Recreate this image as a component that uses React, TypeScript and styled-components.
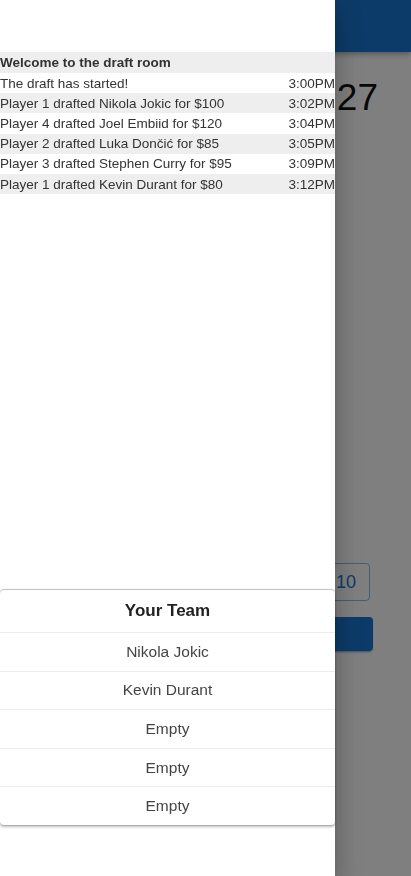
import React from 'react';
import styled, {createGlobalStyle} from 'styled-components';

const GlobalStyle = createGlobalStyle`
  html, body {
    margin: 0;
    padding: 0;
    background: #fff;
    font-family: "Liberation Sans", Arial, Helvetica, sans-serif;
  }
`;

interface LogEntry {
    text: string;
    time: string;
}

const log: LogEntry[] = [
    {text: 'The draft has started!', time: '3:00PM'},
    {text: 'Player 1 drafted Nikola Jokic for $100', time: '3:02PM'},
    {text: 'Player 4 drafted Joel Embiid for $120', time: '3:04PM'},
    {text: 'Player 2 drafted Luka Dončić for $85', time: '3:05PM'},
    {text: 'Player 3 drafted Stephen Curry for $95', time: '3:09PM'},
    {text: 'Player 1 drafted Kevin Durant for $80', time: '3:12PM'},
];

const team = ['Nikola Jokic', 'Kevin Durant', 'Empty', 'Empty', 'Empty'];

const Page = styled.div`
  min-height: 100vh;
  display: flex;
  flex-direction: column;
  box-sizing: border-box;
  padding-bottom: 225px;
`;

const AppBar = styled.header`
  height: 52px;
  background: #1976d2;
  box-shadow: 0 2px 4px -1px rgba(0, 0, 0, 0.2), 0 4px 5px 0 rgba(0, 0, 0, 0.14);
`;

const Timer = styled.div`
  display: flex;
  justify-content: flex-end;
  padding: 24px 33px 0 0;
  font-size: 37px;
  line-height: 44px;
  color: #111;
`;

const Controls = styled.div`
  margin-top: auto;
  display: flex;
  flex-direction: column;
  gap: 16px;
  padding: 0 38px 0 38px;
`;

const BidRow = styled.div`
  display: flex;
  justify-content: flex-end;
  padding-right: 3px;
`;

const BidButton = styled.button`
  height: 38px;
  min-width: 48px;
  padding: 0 10px;
  border: 1px solid rgba(25, 118, 210, 0.5);
  border-radius: 4px;
  background: transparent;
  color: #1976d2;
  font-family: inherit;
  font-size: 18px;
`;

const SubmitButton = styled.button`
  height: 34px;
  border: none;
  border-radius: 4px;
  background: #1976d2;
  color: #fff;
  font-family: inherit;
  font-size: 14px;
  box-shadow: 0 3px 1px -2px rgba(0, 0, 0, 0.2), 0 2px 2px 0 rgba(0, 0, 0, 0.14);
`;

const Backdrop = styled.div`
  position: fixed;
  inset: 0;
  background: rgba(0, 0, 0, 0.5);
`;

const Drawer = styled.aside`
  position: fixed;
  top: 0;
  left: 0;
  bottom: 0;
  width: 335px;
  background: #fff;
  display: flex;
  flex-direction: column;
  padding-top: 52px;
  box-sizing: border-box;
  box-shadow: 0 8px 10px -5px rgba(0, 0, 0, 0.2), 0 16px 24px 2px rgba(0, 0, 0, 0.14),
    0 6px 30px 5px rgba(0, 0, 0, 0.12);
`;

const LogList = styled.div`
  display: flex;
  flex-direction: column;
  flex: 1;
`;

const LogRow = styled.div<{ $shaded?: boolean; $header?: boolean }>`
  display: flex;
  justify-content: space-between;
  align-items: center;
  height: ${p => (p.$header ? '21px' : '20.2px')};
  background: ${p => (p.$shaded ? '#eeeeee' : '#fff')};
  font-size: 13.5px;
  font-weight: ${p => (p.$header ? 700 : 400)};
  color: #333;
  white-space: nowrap;
`;

const TeamCard = styled.div`
  margin-bottom: 51px;
  border-radius: 4px;
  background: #fff;
  box-shadow: 0 -1px 1px rgba(0, 0, 0, 0.25), 0 2px 3px rgba(0, 0, 0, 0.25),
    0 1px 1px rgba(0, 0, 0, 0.14);
`;

const TeamTitle = styled.div`
  height: 42px;
  display: flex;
  align-items: center;
  justify-content: center;
  font-size: 17px;
  font-weight: 700;
  color: #222;
`;

const TeamRow = styled.div`
  height: 38.6px;
  display: flex;
  align-items: center;
  justify-content: center;
  border-top: 1px solid #ececec;
  box-sizing: border-box;
  font-size: 15.5px;
  color: #444;
`;

const App = () => {
    return (
        <>
            <GlobalStyle/>
            <Page>
                <AppBar/>
                <Timer>27</Timer>
                <Controls>
                    <BidRow>
                        <BidButton>10</BidButton>
                    </BidRow>
                    <SubmitButton>BID</SubmitButton>
                </Controls>
            </Page>
            <Backdrop/>
            <Drawer>
                <LogList>
                    <LogRow $header $shaded>Welcome to the draft room</LogRow>
                    {log.map((entry, i) => (
                        <LogRow key={i} $shaded={i % 2 === 1}>
                            <span>{entry.text}</span>
                            <span>{entry.time}</span>
                        </LogRow>
                    ))}
                </LogList>
                <TeamCard>
                    <TeamTitle>Your Team</TeamTitle>
                    {team.map((name, i) => (
                        <TeamRow key={i}>{name}</TeamRow>
                    ))}
                </TeamCard>
            </Drawer>
        </>
    );
};

export default App;
